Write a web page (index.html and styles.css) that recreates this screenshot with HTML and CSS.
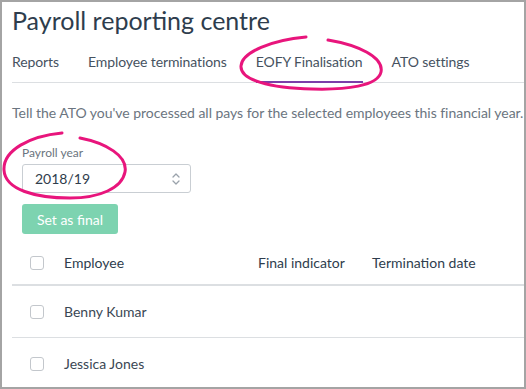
FILE: index.html
```html
<!DOCTYPE html>
<html>
  <head>
    <title>Payroll reporting centre</title>
    <link rel="stylesheet" href="styles.css">
  </head>
  <body>
    <div class="frame">
      <h1 class="title">Payroll reporting centre</h1>

      <nav class="tabs">
        <a class="tab">Reports</a>
        <a class="tab">Employee terminations</a>
        <a class="tab active">EOFY Finalisation</a>
        <a class="tab">ATO settings</a>
      </nav>

      <p class="intro">Tell the ATO you've processed all pays for the selected employees this financial year.</p>

      <div class="field">
        <label class="field-label">Payroll year</label>
        <div class="select">
          <span>2018/19</span>
          <svg class="chevrons" width="8" height="14" viewBox="0 0 8 14">
            <path d="M1 5 L4 2 L7 5 M1 9 L4 12 L7 9" fill="none" stroke="#9aa2ab" stroke-width="1.3" stroke-linecap="round" stroke-linejoin="round"/>
          </svg>
        </div>
      </div>

      <button class="btn" disabled>Set as final</button>

      <table class="grid">
        <thead>
          <tr>
            <th class="check-col"><span class="checkbox"></span></th>
            <th class="name-col">Employee</th>
            <th class="final-col">Final indicator</th>
            <th>Termination date</th>
          </tr>
        </thead>
        <tbody>
          <tr>
            <td class="check-col"><span class="checkbox"></span></td>
            <td>Benny Kumar</td>
            <td></td>
            <td></td>
          </tr>
          <tr>
            <td class="check-col"><span class="checkbox"></span></td>
            <td>Jessica Jones</td>
            <td></td>
            <td></td>
          </tr>
        </tbody>
      </table>

      <!-- hand drawn highlight marks -->
      <svg class="marks" width="526" height="389" viewBox="0 0 526 389">
        <path d="M328 40 C358 45 384 57 381 72 C378 86 346 90 312 89 C270 88 240 80 241 66 C242 52 272 40 306 37" />
        <path d="M80 138 C106 143 128 156 125 172 C122 188 100 198 70 198 C36 198 5 190 4 170 C3 150 30 136 62 133" />
      </svg>
    </div>
  </body>
</html>
```

FILE: styles.css
```css
html, body {
  margin: 0;
  padding: 0;
}

body {
  background-color: #fff;
  font-family: Lato, 'Open Sans', sans-serif;
  color: #2f3d4c;
}

.frame {
  position: relative;
  width: 526px;
  height: 389px;
  box-sizing: border-box;
  border: 2px solid #a4a4a4;
  padding-left: 10px;
  overflow: hidden;
}

.title {
  margin: 0;
  padding-top: 3px;
  font-size: 25px;
  font-weight: 400;
  line-height: 30px;
  color: #2e3d4d;
}

.tabs {
  display: flex;
  gap: 29px;
  margin-top: 9px;
  padding-bottom: 2px;
  border-bottom: 1px solid #dcdfe2;
}

.tab {
  position: relative;
  font-size: 14px;
  line-height: 36px;
  letter-spacing: -0.1px;
  color: #46525f;
}

.tab.active::after {
  content: '';
  position: absolute;
  left: 0;
  right: 0;
  bottom: -3px;
  height: 2px;
  background-color: #7b3ea9;
}

.intro {
  margin: 20px 0 0 0;
  font-size: 14px;
  line-height: 20px;
  letter-spacing: -0.03px;
  white-space: nowrap;
  color: #6b7580;
}

.field {
  margin: 22px 0 0 10px;
}

.field-label {
  display: block;
  font-size: 12px;
  line-height: 16px;
  color: #6b7580;
}

.select {
  display: flex;
  align-items: center;
  justify-content: space-between;
  width: 169px;
  height: 29px;
  box-sizing: border-box;
  margin-top: 3px;
  padding: 0 10px 0 12px;
  border: 1px solid #c9ced3;
  border-radius: 3px;
  font-size: 14px;
  color: #2f3d4c;
}

.btn {
  display: block;
  margin: 11px 0 0 10px;
  width: 96px;
  height: 30px;
  padding: 0;
  border: none;
  border-radius: 3px;
  background-color: #7dd3b0;
  color: #fff;
  font-family: inherit;
  font-size: 14px;
}

.grid {
  width: 514px;
  margin-top: 7px;
  border-collapse: collapse;
  font-size: 14px;
}

.grid th {
  height: 43px;
  padding: 0 12px;
  text-align: left;
  font-weight: 400;
  color: #2e3d4d;
  border-bottom: 2px solid #dcdfe2;
}

.grid td {
  height: 51px;
  padding: 0 12px;
  color: #3a4754;
  border-bottom: 1px solid #dcdfe2;
}

.grid .check-col {
  width: 22px;
  padding: 0 0 0 18px;
}

.grid .name-col {
  width: 170px;
}

.grid .final-col {
  width: 90px;
}

.checkbox {
  display: block;
  width: 14px;
  height: 14px;
  box-sizing: border-box;
  border: 1.5px solid #c3c7cc;
  border-radius: 3px;
}

.marks {
  position: absolute;
  top: -2px;
  left: -2px;
  pointer-events: none;
}

.marks path {
  fill: none;
  stroke: #e8157c;
  stroke-width: 3;
  stroke-linecap: round;
}
```
